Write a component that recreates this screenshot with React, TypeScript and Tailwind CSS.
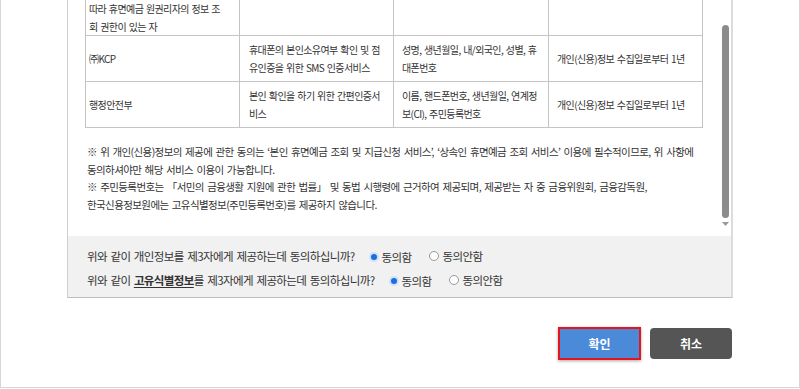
import React from 'react';

const rows = [
  {
    org: ['따라 휴면예금 원권리자의 정보 조', '회 권한이 있는 자'],
    purpose: [],
    items: [],
    period: [],
    first: true,
  },
  {
    org: ['㈜KCP'],
    purpose: ['휴대폰의 본인소유여부 확인 및 점', '유인증을 위한 SMS 인증서비스'],
    items: ['성명, 생년월일, 내/외국인, 성별, 휴', '대폰번호'],
    period: ['개인(신용)정보 수집일로부터 1년'],
  },
  {
    org: ['행정안전부'],
    purpose: ['본인 확인을 하기 위한 간편인증서', '비스'],
    items: ['이름, 핸드폰번호, 생년월일, 연계정', '보(CI), 주민등록번호'],
    period: ['개인(신용)정보 수집일로부터 1년'],
  },
];

const Lines = ({ lines }: { lines: string[] }) => (
  <>
    {lines.map((l, i) => (
      <div key={i} className="whitespace-nowrap">
        {l}
      </div>
    ))}
  </>
);

const Radio = ({ checked, label }: { checked: boolean; label: string }) => (
  <span className="inline-flex items-center gap-[3px]">
    {checked ? (
      <span className="w-[10px] h-[10px] rounded-full bg-[#cfe0f7] flex items-center justify-center">
        <span className="w-[6px] h-[6px] rounded-full bg-[#1a6fe0]" />
      </span>
    ) : (
      <span className="w-[10px] h-[10px] rounded-full border border-[#9a9a9a] bg-white" />
    )}
    <span>{label}</span>
  </span>
);

const App: React.FC = () => {
  return (
    <div
      className="w-[800px] h-[389px] bg-white overflow-hidden text-[#333] text-[10px] tracking-[-0.6px]"
      style={{ fontFamily: '"Noto Sans CJK KR", "Noto Sans", sans-serif' }}
    >
      <div className="h-[388px] border-x border-b border-[#d6d6d6] px-[66px] flex flex-col">
        {/* scroll area */}
        <div className="h-[236px] flex border-l border-r-2 border-l-[#cfcfcf] border-r-[#dcdcdc]">
          <div className="flex-1 overflow-hidden">
            <table className="ml-[17px] w-[617px] table-fixed border-collapse leading-[17.5px] [word-spacing:1px]">
              <colgroup>
                <col className="w-[154px]" />
                <col className="w-[154px]" />
                <col className="w-[155px]" />
                <col className="w-[154px]" />
              </colgroup>
              <tbody>
                {rows.map((r, i) => (
                  <tr key={i} className={r.first ? 'h-[34px]' : 'h-[46px]'}>
                    <td className={`border border-[#c4c4c4] pl-[3px] align-middle ${r.first ? 'border-t-0 p-0 pl-[3px]' : ''}`}>
                      <Lines lines={r.org} />
                    </td>
                    <td className={`border border-[#c4c4c4] pl-[9px] align-middle ${r.first ? 'border-t-0' : ''}`}>
                      <Lines lines={r.purpose} />
                    </td>
                    <td className={`border border-[#c4c4c4] pl-[8px] align-middle ${r.first ? 'border-t-0' : ''}`}>
                      <Lines lines={r.items} />
                    </td>
                    <td className={`border border-[#c4c4c4] pl-[8px] align-middle ${r.first ? 'border-t-0' : ''}`}>
                      <Lines lines={r.period} />
                    </td>
                  </tr>
                ))}
              </tbody>
            </table>
            <div className="pl-[19px] mt-[15px] leading-[17.7px] text-[10.5px] [word-spacing:1.5px]">
              <div className="whitespace-nowrap">
                ※ 위 개인(신용)정보의 제공에 관한 동의는 ‘본인 휴면예금 조회 및 지급신청 서비스’, ‘상속인 휴면예금 조회 서비스’ 이용에 필수적이므로, 위 사항에
              </div>
              <div className="whitespace-nowrap">동의하셔야만 해당 서비스 이용이 가능합니다.</div>
              <div className="whitespace-nowrap">
                ※ 주민등록번호는 「서민의 금융생활 지원에 관한 법률」 및 동법 시행령에 근거하여 제공되며, 제공받는 자 중 금융위원회, 금융감독원,
              </div>
              <div className="whitespace-nowrap">한국신용정보원에는 고유식별정보(주민등록번호)를 제공하지 않습니다.</div>
            </div>
          </div>
          {/* scrollbar */}
          <div className="w-[13px] flex flex-col items-end pr-[2px] pt-[25px]">
            <div className="w-[7px] h-[193px] rounded-full bg-[#8c8c8c]" />
            <svg className="mt-[4px]" width="7" height="5" viewBox="0 0 7 5">
              <path d="M0 0 H7 L3.5 4 Z" fill="#9a9a9a" />
            </svg>
          </div>
        </div>

        {/* consent box */}
        <div className="h-[62px] bg-[#f1f1f1] border-l border-r-2 border-b border-l-[#cfcfcf] border-r-[#dcdcdc] border-b-[#bdbdbd] pl-[19px] pt-[8px] leading-[22px] text-[11.5px] [word-spacing:1.5px]">
          <div className="flex items-center whitespace-nowrap">
            <span>위와 같이 개인정보를 제3자에게 제공하는데 동의하십니까?</span>
            <span className="ml-[14px]">
              <Radio checked label="동의함" />
            </span>
            <span className="ml-[18px]">
              <Radio checked={false} label="동의안함" />
            </span>
          </div>
          <div className="flex items-center whitespace-nowrap">
            <span>
              위와 같이 <b className="underline underline-offset-2">고유식별정보</b>를 제3자에게 제공하는데 동의하십니까?
            </span>
            <span className="ml-[14px]">
              <Radio checked label="동의함" />
            </span>
            <span className="ml-[18px]">
              <Radio checked={false} label="동의안함" />
            </span>
          </div>
        </div>

        {/* buttons */}
        <div className="flex justify-end gap-[9px] mt-[29px] pr-[1px] tracking-normal">
          <button className="w-[83px] h-[33px] border-2 border-[#e8141b] bg-[#4a8ad8] text-white font-bold text-[12px] shadow-[0_1px_3px_rgba(0,0,0,0.35)]">
            확인
          </button>
          <button className="w-[82px] h-[31px] mt-[1px] rounded-[4px] bg-[#555555] text-white font-bold text-[12px]">
            취소
          </button>
        </div>
      </div>
    </div>
  );
};

export default App;
